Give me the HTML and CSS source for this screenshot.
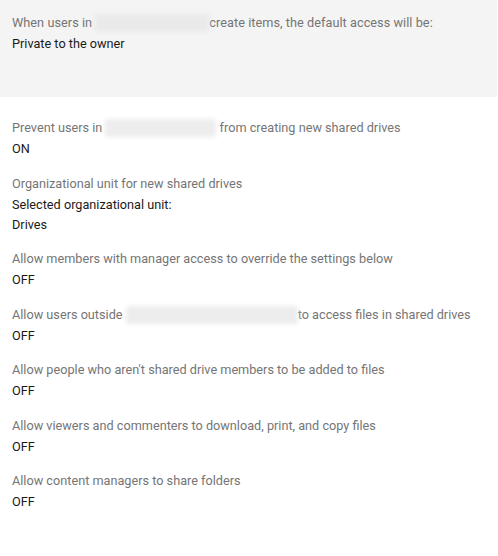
FILE: index.html
```html
<!DOCTYPE html>
<html>
<head>
<meta charset="utf-8">
<link rel="stylesheet" href="styles.css">
</head>
<body>
<div class="band">
  <div class="label">When users in <span class="redact r1"></span>create items, the default access will be:</div>
  <div class="value">Private to the owner</div>
</div>
<div class="list">
  <div class="item">
    <div class="label">Prevent users in <span class="redact r2"></span> from creating new shared drives</div>
    <div class="value">ON</div>
  </div>
  <div class="item">
    <div class="label">Organizational unit for new shared drives</div>
    <div class="value">Selected organizational unit:</div>
    <div class="value">Drives</div>
  </div>
  <div class="item">
    <div class="label">Allow members with manager access to override the settings below</div>
    <div class="value">OFF</div>
  </div>
  <div class="item">
    <div class="label">Allow users outside <span class="redact r3"></span>to access files in shared drives</div>
    <div class="value">OFF</div>
  </div>
  <div class="item">
    <div class="label">Allow people who aren't shared drive members to be added to files</div>
    <div class="value">OFF</div>
  </div>
  <div class="item">
    <div class="label">Allow viewers and commenters to download, print, and copy files</div>
    <div class="value">OFF</div>
  </div>
  <div class="item">
    <div class="label">Allow content managers to share folders</div>
    <div class="value">OFF</div>
  </div>
</div>
</body>
</html>
```

FILE: styles.css
```css
html, body {
  margin: 0;
  padding: 0;
  background: #ffffff;
}
body {
  font-family: Roboto, "Liberation Sans", Arial, sans-serif;
  font-size: 12.7px;
  color: #212121;
}
.band {
  background: #f4f4f4;
  padding: 13px 12px 43px 12px;
  margin-right: 1px;
}
.label {
  color: #757575;
  line-height: 20px;
  margin-bottom: 1px;
  white-space: nowrap;
}
.band .label {
  letter-spacing: 0.05px;
}
.value {
  color: #1a1a1a;
  line-height: 20px;
}
.list {
  padding: 21px 12px 0 12px;
}
.item {
  margin-bottom: 14.5px;
}
.redact {
  display: inline-block;
  height: 18px;
  vertical-align: -5px;
  background: #ededed;
  filter: blur(2px);
  border-radius: 2px;
}
.band .redact {
  background: #eaeaea;
}
.r1 { width: 114px; }
.r2 { width: 111px; }
.r3 { width: 172px; }
```
